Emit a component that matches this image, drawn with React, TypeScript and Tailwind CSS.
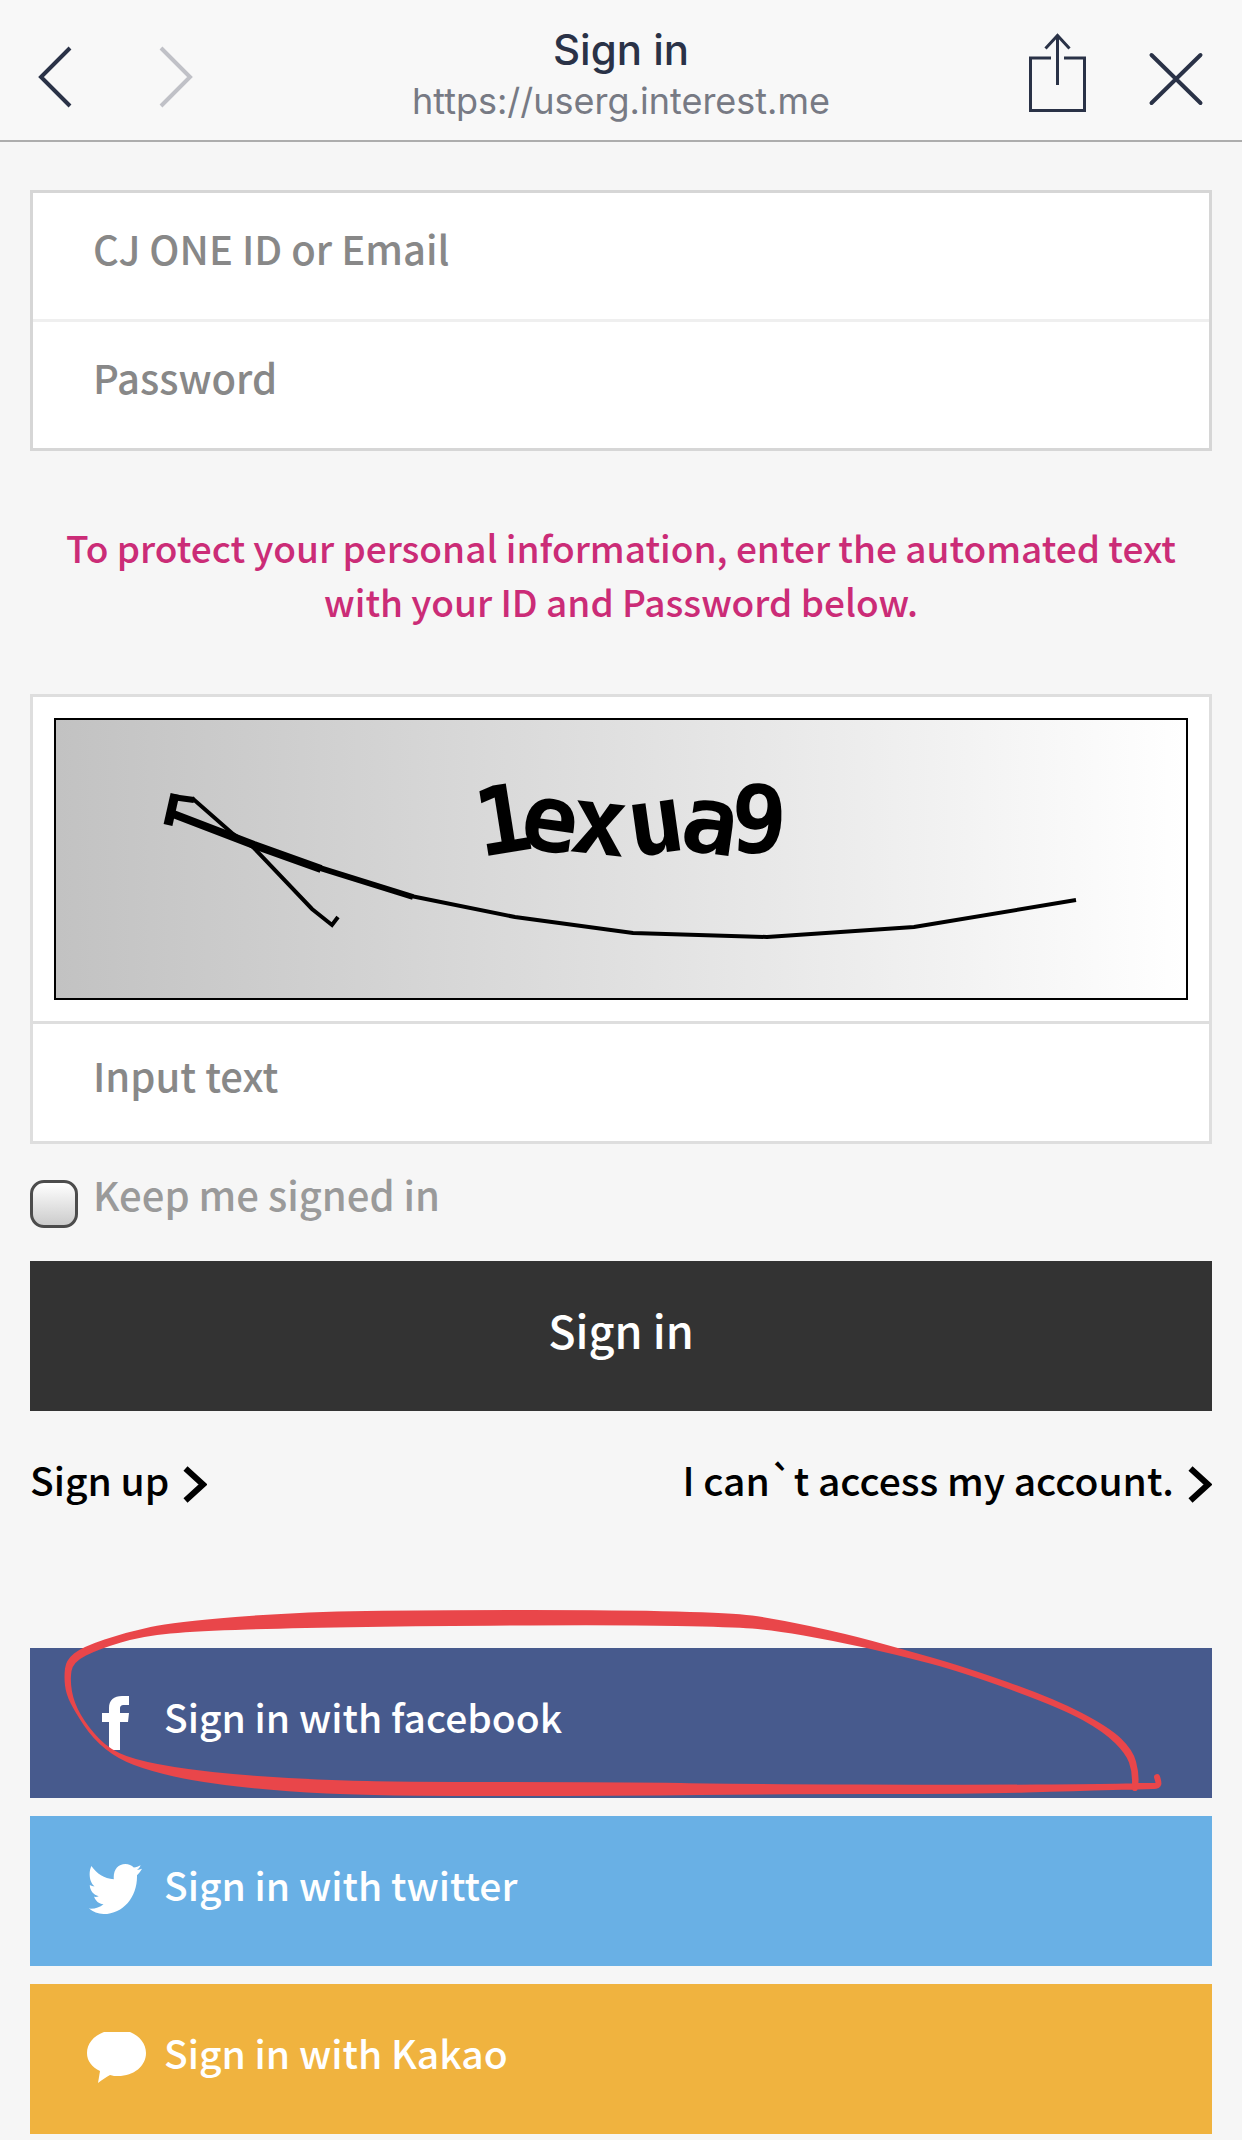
import React, { useState } from 'react';

type Point = [number, number];

interface SocialLink {
  id: string;
  label: string;
  className: string;
  icon: React.ReactNode;
}

// Runs a smooth closed curve along the points.
const smoothPath = (points: Point[]) => {
  const mid = (a: Point, b: Point) => `${(a[0] + b[0]) / 2} ${(a[1] + b[1]) / 2}`;
  const start = mid(points[points.length - 1], points[0]);
  const curves = points.map((p, i) => `Q${p[0]} ${p[1]} ${mid(p, points[(i + 1) % points.length])}`);
  return `M${start} ${curves.join(' ')} Z`;
};

const MARKER_POINTS: Point[] = [
  [34, 77], [36, 60], [52, 47], [97, 32], [144, 22], [267, 12], [406, 10], [591, 10],
  [702, 13], [742, 18], [817, 34], [868, 48], [932, 66], [1023, 98], [1079, 127], [1103, 150],
  [1109, 173], [1108, 190], [1106, 191], [1103, 191], [1102, 189], [1102, 171], [1096, 154], [1074, 132],
  [1031, 108], [932, 72], [868, 55], [805, 41], [742, 30], [702, 27], [591, 25], [406, 26],
  [267, 28], [168, 31], [113, 36], [69, 49], [43, 62], [40, 80], [44, 103], [58, 127],
  [80, 150], [113, 162], [176, 172], [267, 179], [366, 182], [591, 182], [710, 184], [947, 185],
  [1066, 184], [1125, 183], [1127, 183], [1126, 189], [1120, 189], [1046, 191], [947, 194], [749, 194],
  [591, 196], [346, 196], [247, 191], [168, 182], [120, 171], [88, 159], [63, 139], [45, 112], [36, 94],
];

const FacebookIcon = () => (
  <svg className="h-[54px] w-[30px] pr-[3px]" viewBox="0 0 27 54" fill="currentColor" aria-hidden="true">
    <path d="M27 0h-7C12 0 7 4 7 12v5H0v9h7v28h11V26h8l1-9h-9v-4c0-3 1-4 4-4h5V0Z" />
  </svg>
);

const TwitterIcon = () => (
  <svg className="h-[50px] w-14 pr-[3px]" viewBox="0 0 53 50" fill="currentColor" aria-hidden="true">
    <path d="M2.4 2C8 10 15 14.5 24.8 15.2 24 6 29 0 36.4 0c3.400 0 6.200 1.300 8.400 3.600 2.500-.4 4.700-1.300 6.800-2.400-.8 2-2 3.500-3.600 4.700 1.800-.1 3.400-.5 5-1.100-1.400 2.600-3 4.700-5 6.500C48.500 32 35 50 14.500 50 9 50 4 48 0 44.600c6 .4 10.500-1.200 14.500-4.400-4.600-.4-8-3.200-9.400-7.400 1.700.2 3.200.1 4.600-.5C4.500 30.800.8 26.500.8 21c1.500.8 3 1.300 4.700 1.400C.8 18.600-1 9.500 2.400 2Z" />
  </svg>
);

const KakaoIcon = () => (
  <svg className="h-[52px] w-[60px]" viewBox="0 0 60 52" fill="currentColor" aria-hidden="true">
    <path d="M17 0h26c10 4 16 12 16 21 0 13-12 23-28 23-3 0-5 0-8-1-4 2-8 5-12 8l2-12C5 35 0 29 0 21 0 12 6 4 17 0Z" />
  </svg>
);

const ChevronIcon = () => (
  <svg className="h-11 w-6 shrink-0" viewBox="0 0 24 44" fill="none" stroke="currentColor" strokeWidth="6" aria-hidden="true">
    <path d="M2.500 6.500 20 22.500 2.500 38.500" />
  </svg>
);

const socialLinks: SocialLink[] = [
  { id: 'facebook', label: 'Sign in with facebook', className: 'bg-[#475a8d]', icon: <FacebookIcon /> },
  { id: 'twitter', label: 'Sign in with twitter', className: 'bg-[#69b0e5]', icon: <TwitterIcon /> },
  { id: 'kakao', label: 'Sign in with Kakao', className: 'bg-[#f0b33f]', icon: <KakaoIcon /> },
];

const BrowserBar = () => (
  <header className="grid grid-cols-[1fr_auto_1fr] border-b-2 border-[#adadad] bg-[#f8f8f8] px-9 font-['Inter',sans-serif] text-[#2a3247]">
    <nav className="flex items-center gap-20 pt-[14px]">
      <button type="button" aria-label="Back">
        <svg className="h-[94px] w-10" viewBox="0 0 40 94" fill="none" stroke="currentColor" strokeWidth="4">
          <path d="M34 18 5 47l29 29" />
        </svg>
      </button>
      <button type="button" aria-label="Forward" disabled className="text-[#c0c1c7]">
        <svg className="h-[94px] w-10" viewBox="0 0 40 94" fill="none" stroke="currentColor" strokeWidth="4">
          <path d="m5 18 29 29L5 76" />
        </svg>
      </button>
    </nav>

    <div className="pt-6 pb-[14px] text-center">
      <h1 className="text-[42px] leading-[52px]">Sign in</h1>
      <p className="text-[36px] leading-[50px] font-normal text-[#777a84]">https://userg.interest.me</p>
    </div>

    <div className="flex items-center justify-end gap-[58px] pt-[14px]">
      <button type="button" aria-label="Share">
        <svg className="h-[94px] w-16" viewBox="0 0 64 94" fill="none" stroke="currentColor" strokeWidth="3">
          <path d="M25 28H4.500v52.500h54V28H38M31.500 55V6M19.500 18.500l12-13 12 13" />
        </svg>
      </button>
      <button type="button" aria-label="Close">
        <svg className="h-[94px] w-[58px]" viewBox="0 0 58 94" fill="none" stroke="currentColor" strokeWidth="4" strokeLinecap="round">
          <path d="m3.500 25 49 48M52.500 25l-49 48" />
        </svg>
      </button>
    </div>
  </header>
);

const Captcha = () => (
  <div className="border-2 border-black bg-linear-to-r from-[#c2c2c2] to-white">
    <svg className="block w-full" viewBox="0 0 1130 278" role="img" aria-label="Security text">
      <g fill="none" stroke="#000">
        <path strokeWidth="9" d="m112 105 7-31" />
        <path strokeWidth="6" d="m116 77 22 3" />
        <path strokeWidth="4" d="m136 78 41 36 20 13 59 62 20 16 6-8" />
        <path strokeWidth="8" d="m112 92 86 33 67 24" />
        <path strokeWidth="6" d="m264 148 93 29" />
        <path strokeWidth="4" d="m355 176 104 21 118 16 134 4 147-10 162-27" />
      </g>
      <text
        className="font-['DejaVu_Sans_Mono',monospace] text-[94px] font-bold"
        x="424 462 512 576 622 673"
        y="137 127 131 137 129 131"
        rotate="-9 8 6 -8 8 3"
      >
        1exua9
      </text>
    </svg>
  </div>
);

const inputClass =
  'block w-full bg-white pr-6 pb-4 pl-[60px] text-[40px] text-neutral-700 outline-none placeholder:text-[#888888]';

export default function App() {
  const [keepSignedIn, setKeepSignedIn] = useState(false);

  return (
    <div className="min-h-screen bg-[#f6f6f6] font-['Noto_Sans_CJK_KR',sans-serif] font-medium">
      <BrowserBar />

      <main className="px-[30px] pb-[6px]">
        <form onSubmit={(e) => e.preventDefault()}>
          {/* Account */}
          <div className="mt-12 divide-y-3 divide-[#efefef] border-3 border-[#d6d6d6]">
            <input type="text" aria-label="CJ ONE ID or Email" placeholder="CJ ONE ID or Email" className={`${inputClass} h-[129px]`} />
            <input type="password" aria-label="Password" placeholder="Password" className={`${inputClass} h-[126px]`} />
          </div>

          <p className="mx-auto mt-[69px] max-w-[1140px] text-center text-[37px] leading-[54px] text-[#cb2c77]">
            To protect your personal information, enter the automated text with your ID and Password below.
          </p>

          {/* Captcha */}
          <div className="mt-[66px] divide-y-3 divide-[#dedede] border-3 border-[#dedede] bg-white">
            <div className="p-[21px]">
              <Captcha />
            </div>
            <input type="text" aria-label="Input text" placeholder="Input text" className={`${inputClass} h-[117px]`} />
          </div>

          <div className="flex items-end gap-[15px] pt-[23px] pb-[33px]">
            <input
              id="keep"
              type="checkbox"
              checked={keepSignedIn}
              onChange={(e) => setKeepSignedIn(e.target.checked)}
              className="size-12 appearance-none rounded-[14px] border-3 border-[#4c4c4c] bg-linear-to-b from-white to-[#cccccc]"
            />
            <label htmlFor="keep" className="pb-[7px] text-[40px] leading-[54px] text-[#9a9a9a]">
              Keep me signed in
            </label>
          </div>

          <button type="submit" className="block h-[150px] w-full bg-[#333333] pb-3 text-[45px] text-white">
            Sign in
          </button>
        </form>

        <div className="mt-[41px] flex justify-between text-[39px] leading-[54px] text-black">
          <a href="#signup" className="flex items-end gap-[14px]">
            Sign up
            <ChevronIcon />
          </a>
          <a href="#account" className="flex items-end gap-[14px]">
            I can`t access my account.
            <ChevronIcon />
          </a>
        </div>

        {/* Social sign in */}
        <div className="relative mt-[142px] space-y-[18px]">
          {socialLinks.map((link) => (
            <button
              key={link.id}
              type="button"
              className={`flex h-[150px] w-full items-center gap-[17px] pl-[57px] text-[39px] text-white ${link.className}`}
            >
              <span className="flex h-[54px] w-[60px] items-start justify-center">{link.icon}</span>
              <span className="pb-[14px]">{link.label}</span>
            </button>
          ))}

          {/* Hand-drawn marker round the facebook button */}
          <svg
            className="pointer-events-none absolute inset-x-0 -top-12 h-[200px] w-full"
            viewBox="0 0 1182 200"
            preserveAspectRatio="none"
            aria-hidden="true"
          >
            <path fill="#e9464a" d={smoothPath(MARKER_POINTS)} />
            <path fill="none" stroke="#e9464a" strokeWidth="6" strokeLinecap="round" d="M1127 177c2 6 3 9-4 9h-18" />
          </svg>
        </div>
      </main>
    </div>
  );
}
